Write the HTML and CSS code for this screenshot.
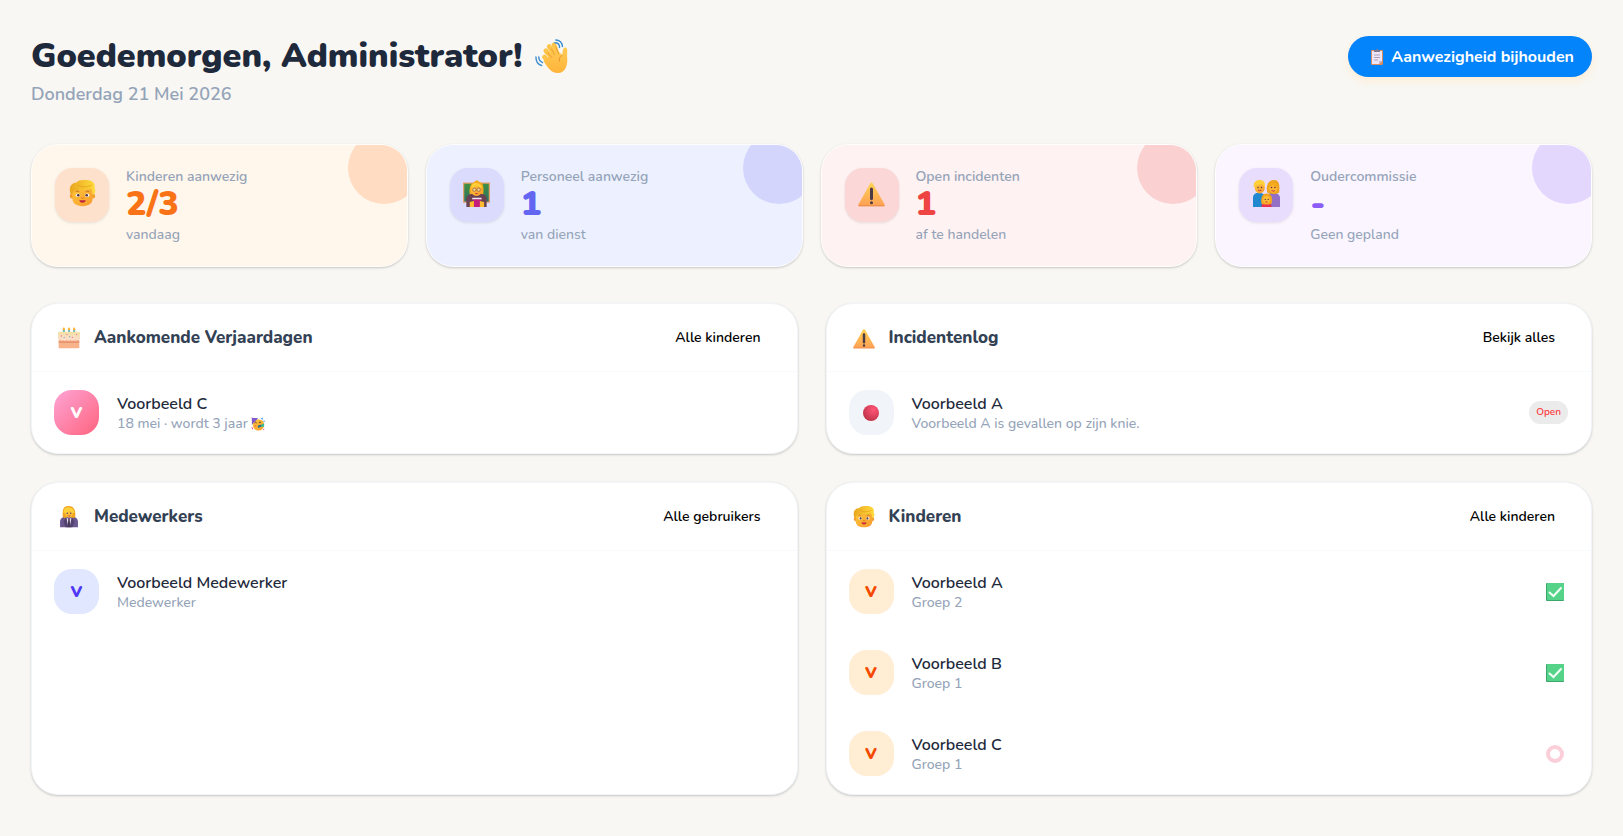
FILE: index.html
```html
<!DOCTYPE html>
<html lang="nl">
<head>
    <meta charset="UTF-8" />
    <meta name="viewport" content="width=device-width, initial-scale=1" />
    <title>Dashboard</title>
    <link rel="stylesheet" href="styles.css">
</head>
<body>
<!-- Gedeelde iconen -->
<svg class="sprite" aria-hidden="true">
    <defs>
        <linearGradient id="geel" x1="0" y1="0" x2="1" y2="1">
            <stop offset="0" stop-color="#ffc83a" />
            <stop offset="1" stop-color="#f79a2e" />
        </linearGradient>
        <linearGradient id="hand" x1="0" y1="0" x2="0" y2="1">
            <stop offset="0" stop-color="#ffca55" />
            <stop offset="1" stop-color="#ffb43a" />
        </linearGradient>
        <linearGradient id="haar" x1="0" y1="0" x2="1" y2="0">
            <stop offset="0" stop-color="#e9a520" />
            <stop offset="1" stop-color="#ffdc3c" />
        </linearGradient>
        <linearGradient id="driehoek" x1="0" y1="0" x2="0" y2="1">
            <stop offset="0" stop-color="#ffd352" />
            <stop offset="1" stop-color="#ff9f55" />
        </linearGradient>
        <linearGradient id="glazuur" x1="0" y1="0" x2="0" y2="1">
            <stop offset="0" stop-color="#f4dfa0" />
            <stop offset="1" stop-color="#fbdcd0" />
        </linearGradient>
        <linearGradient id="bord" x1="0" y1="0" x2="0" y2="1">
            <stop offset="0" stop-color="#3f9142" />
            <stop offset="1" stop-color="#2b7064" />
        </linearGradient>
        <radialGradient id="rood" cx="0.65" cy="0.3" r="0.8">
            <stop offset="0" stop-color="#ff5578" />
            <stop offset="1" stop-color="#ba3145" />
        </radialGradient>
        <symbol id="kind" viewBox="0 0 32 32">
            <circle cx="4" cy="19" r="3" fill="#f39a2c" />
            <circle cx="28" cy="19" r="3" fill="#f0a030" />
            <path d="M4 7h24v15c0 6-5 9-12 9S4 28 4 22z" fill="url(#geel)" />
            <path d="M2 17C-1 9 3 3 9 3c2-3 7-3 12-3 7 0 11 5 9 9 2 3 1 6 0 8h-2c0-3-1-5-2-7-6 3-13 1-16 2-4 0-5 2-6 5z" fill="url(#haar)" />
            <path d="M10 6c5 3 11 3 17 0" fill="none" stroke="#e8a01d" stroke-width="1" />
            <path d="M8 14q2-2 4 0M20 14q2-2 4 0" fill="none" stroke="#c77a22" stroke-width="1.200" />
            <ellipse cx="10.500" cy="18" rx="2.500" ry="2" fill="#fff" />
            <ellipse cx="21.500" cy="18" rx="2.500" ry="2" fill="#fff" />
            <circle cx="11" cy="18" r="1.500" fill="#4a3040" />
            <circle cx="21" cy="18" r="1.500" fill="#4a3040" />
            <path d="M14 21q2 1.500 4 0" fill="none" stroke="#e07a20" stroke-width="1.200" />
            <path d="M12 24h8q-1 3-4 3t-4-3z" fill="#c2243e" />
        </symbol>
        <symbol id="leraar" viewBox="0 0 32 32">
            <path d="M0 3h32v24H0z" fill="#e3a06a" />
            <path d="M1.500 4.500h29v21h-29z" fill="url(#bord)" />
            <path d="M8 17C7 9 9 4 13 3c1-3 5-3 6-1 5 1 6 6 5 15l-4 3h-8z" fill="#f6a91f" />
            <path d="M4 32V22c0-4 4-6 12-6s12 2 12 6v10z" fill="#694150" />
            <ellipse cx="16" cy="12" rx="6.500" ry="7" fill="url(#geel)" />
            <path d="M9.500 9c1-5 4-6 8-5 3 0 5 3 5 5-4 0-5-2-6-3-2 2-4 3-7 3z" fill="#ffcf38" />
            <g fill="#fbd68e" stroke="#80503a" stroke-width="0.800">
                <circle cx="13.500" cy="11.500" r="2" />
                <circle cx="18.500" cy="11.500" r="2" />
            </g>
            <path d="M14 15.500h4q-2 2-4 0z" fill="#c2243e" />
            <path d="M11 21h11v2H11z" fill="#eee5f5" />
            <path d="M12 23h9v9h-9z" fill="#c51d7c" />
            <path d="M8 26l5-1v7H8zM25 26l-5-1v7h5z" fill="#ffba30" />
        </symbol>
        <symbol id="waarschuwing" viewBox="0 0 32 32">
            <path d="M14.500 4q1.500-2 3 0L31.500 29q1 2-1 2h-29q-2 0-1-2z" fill="url(#driehoek)" />
            <path d="M1 30.500h30" stroke="#e58a45" stroke-width="1" />
            <path d="M14.200 11q0-2 1.800-2t1.800 2v11q0 2-1.800 2t-1.800-2z" fill="#4b3b46" />
            <circle cx="16" cy="27" r="1.800" fill="#4b3b46" />
        </symbol>
        <symbol id="gezin" viewBox="0 0 32 32">
            <path d="M0 32V21c0-4 3-6 7-6 5 0 8 3 8 7v10z" fill="#2187cf" />
            <path d="M16 32V21c0-4 3-6 8-6 5 0 8 3 8 6v11z" fill="#9470c4" />
            <ellipse cx="8" cy="9" rx="6" ry="7" fill="url(#geel)" />
            <path d="M1 9C0 3 3 0 8 0s7 3 6 8c-2-1-3-3-4-3-3 1-6 0-8 3z" fill="#ffd03a" />
            <path d="M17 15c-1-3-1-7 0-9 1-4 4-6 8-6 6 0 7 6 6 15-4 2-10 2-14 0z" fill="#eda41e" />
            <ellipse cx="24" cy="9.500" rx="5" ry="5.500" fill="#ffb435" />
            <path d="M18 8c1-5 4-6 7-5 4 1 5 4 5 6-4 0-5-2-6-3-2 2-4 3-6 2z" fill="#f5a91c" />
            <g fill="#5c3945">
                <circle cx="6" cy="9" r="0.900" />
                <circle cx="10" cy="9" r="0.900" />
                <circle cx="22" cy="9" r="0.900" />
                <circle cx="26" cy="9" r="0.900" />
            </g>
            <path d="M6 12q2 1.500 4 0M22 12.500q2 1.500 4 0" fill="none" stroke="#c2243e" stroke-width="1" />
            <path d="M10 32c0-4 2-5 6-5s6 1 6 5z" fill="#ed2f52" />
            <path d="M10 28c-1-7 1-12 6-12s8 4 6 12l-3 1h-6z" fill="#f2a51f" />
            <ellipse cx="16" cy="23.500" rx="4" ry="4.500" fill="#ffbd38" />
            <circle cx="14.500" cy="23" r="0.800" fill="#5c3945" />
            <circle cx="18" cy="23" r="0.800" fill="#5c3945" />
            <path d="M14.500 26h3" stroke="#c2243e" stroke-width="1" />
        </symbol>
        <symbol id="taart" viewBox="0 0 32 32">
            <path d="M7 3h3v6H7zM14.500 3h3v6h-3zM22 3h3v6h-3z" fill="#4cbad0" />
            <path d="M8.500 0l1.800 3q0 2-1.800 2T6.700 3zM16 0l1.800 3q0 2-1.800 2t-1.800-2zM23.500 0l1.800 3q0 2-1.800 2t-1.800-2z" fill="#ffb12f" />
            <path d="M1 18h30v12q0 1-1 1H2q-1 0-1-1z" fill="#f9b38a" />
            <path d="M1 21h30v2H1z" fill="#df8866" />
            <path d="M0 9q0-2 2-2h28q2 0 2 2v8q-2 3-4 1-2 3-5 1-2 2-5 0-2 2-5 0-3 2-5 0-3 2-5-1-2 1-3-1z" fill="url(#glazuur)" />
            <g fill="#e36ba0">
                <circle cx="5" cy="13" r="0.900" />
                <circle cx="13" cy="11" r="0.900" />
                <circle cx="21" cy="15" r="0.900" />
                <circle cx="27" cy="11" r="0.900" />
            </g>
            <circle cx="9" cy="15" r="0.900" fill="#7fa0d8" />
            <circle cx="17" cy="14" r="0.900" fill="#7fa0d8" />
        </symbol>
        <symbol id="medewerker" viewBox="0 0 32 32">
            <path d="M3 31V23c0-5 4-8 13-8s13 3 13 8v8z" fill="#6a578e" />
            <path d="M12 16l4 4 4-4-2 15h-4z" fill="#e9e1f1" />
            <path d="M12 16l3 15h-4l-3-8zM20 16l-3 15h4l3-8z" fill="#52426f" />
            <path d="M15 19h2l1 12h-4z" fill="#493956" />
            <path d="M7 16C6 5 8 0 15 0c8 0 11 5 10 16q-2 2-4 1l-5-2-5 2q-2 1-4-1z" fill="#f0a41d" />
            <ellipse cx="16" cy="10" rx="6" ry="7" fill="#ffbe38" />
            <path d="M8 10c0-7 4-9 8-8 5 0 8 3 8 8-4 0-6-2-7-4-2 3-5 4-9 4z" fill="#ffd23c" />
            <circle cx="13.500" cy="10.500" r="1" fill="#4f465f" />
            <circle cx="18.500" cy="10.500" r="1" fill="#4f465f" />
            <path d="M14 14q2 1.500 4 0" fill="none" stroke="#c2243e" stroke-width="1" />
        </symbol>
        <symbol id="feest" viewBox="0 0 32 32">
            <path d="M2 2h14L2 18z" fill="#7857c7" />
            <circle cx="17" cy="18" r="13" fill="url(#geel)" />
            <path d="M1 1l14 3-9 10z" fill="#8359cd" />
            <path d="M8 14q3-4 5 0M18 13q3-3 5 0" fill="none" stroke="#533a37" stroke-width="2" />
            <path d="M15 20l8-3 2 4-8 4z" fill="#296f8e" />
            <path d="M23 18l7-4v8l-6 1z" fill="#31bd94" />
            <path d="M22 4l4-3 2 5zM27 9l4-1v4z" fill="#3598e5" />
            <path d="M1 23l4 2-2 4zM27 28l3-2v4zM16 1l4 2" fill="#eb4086" />
            <circle cx="10" cy="20" r="2" fill="#f46d50" />
        </symbol>
        <symbol id="vink" viewBox="0 0 18 18">
            <rect width="18" height="18" rx="1" fill="#3ba56b" />
            <rect x="1" width="17" height="17" rx="1" fill="#55d389" />
            <path d="M3.500 9.500l4 3.500L15 5" fill="none" stroke="#f5fff8" stroke-width="2" stroke-linecap="round" />
        </symbol>
    </defs>
</svg>

<main class="container">
    <header class="kop">
        <div>
            <h1>Goedemorgen, Administrator!
                <svg class="zwaai" viewBox="0 0 36 38" aria-hidden="true">
                    <g fill="none" stroke="#ffc54a" stroke-width="5" stroke-linecap="round">
                        <path d="M20 23L11.500 13.500" />
                        <path d="M22 20L15 9" />
                        <path d="M24 18L20 7" />
                        <path d="M15 26L10 20" />
                    </g>
                    <path d="M12 22l11-9 6 5c0-5 1-8 3-8 3 0 2 4 2 10 1 7-1 17-10 17-7 0-11-6-15-13z" fill="url(#hand)" />
                    <path d="M13 15l5 6M17 11l4 7M22 9l3 8" fill="none" stroke="#e79a31" stroke-width="1" />
                    <path d="M29 18c-3 2-4 4-3 7" fill="none" stroke="#e8912e" stroke-width="1" />
                    <g fill="none" stroke="#3d8ed0" stroke-width="1.500" stroke-linecap="round">
                        <path d="M1 20c0 5 2 8 6 9M4 20c0 3 2 5 4 6" />
                        <path d="M22 2c4 0 7 3 7 7M21 5c3 0 5 2 5 5" />
                    </g>
                </svg>
            </h1>
            <p class="datum">Donderdag 21 Mei 2026</p>
        </div>
        <button class="btn-aanwezigheid" type="button">
            <svg class="klembord" viewBox="0 0 12 16" aria-hidden="true">
                <rect y="1" width="12" height="15" rx="1" fill="#d88c62" />
                <path d="M1 2h10v10l-3 3H1z" fill="#eee5f6" />
                <path d="M11 12H8v3z" fill="#c8b8d6" />
                <path d="M3 1h2q1-2 2 0h2v2H3z" fill="#82798f" />
                <path d="M3 6h6M3 8.500h6M3 11h4" stroke="#aea3bc" stroke-width="1" />
            </svg>
            Aanwezigheid bijhouden
        </button>
    </header>

    <section class="stats">
        <article class="stat stat-oranje">
            <div class="stat-icoon"><svg aria-hidden="true"><use href="#kind" /></svg></div>
            <div class="stat-tekst">
                <h2>Kinderen aanwezig</h2>
                <strong>2/3</strong>
                <p>vandaag</p>
            </div>
        </article>
        <article class="stat stat-blauw">
            <div class="stat-icoon"><svg aria-hidden="true"><use href="#leraar" /></svg></div>
            <div class="stat-tekst">
                <h2>Personeel aanwezig</h2>
                <strong>1</strong>
                <p>van dienst</p>
            </div>
        </article>
        <article class="stat stat-rood">
            <div class="stat-icoon"><svg aria-hidden="true"><use href="#waarschuwing" /></svg></div>
            <div class="stat-tekst">
                <h2>Open incidenten</h2>
                <strong>1</strong>
                <p>af te handelen</p>
            </div>
        </article>
        <article class="stat stat-paars">
            <div class="stat-icoon"><svg aria-hidden="true"><use href="#gezin" /></svg></div>
            <div class="stat-tekst">
                <h2>Oudercommissie</h2>
                <strong>-</strong>
                <p>Geen gepland</p>
            </div>
        </article>
    </section>

    <section class="panelen">
        <article class="paneel">
            <header class="paneel-kop">
                <svg aria-hidden="true"><use href="#taart" /></svg>
                <h2>Aankomende Verjaardagen</h2>
                <a href="#">Alle kinderen</a>
            </header>
            <ul>
                <li>
                    <span class="avatar avatar-roze">V</span>
                    <div class="info">
                        <h3>Voorbeeld C</h3>
                        <p>18 mei · wordt 3 jaar <svg class="feest" aria-hidden="true"><use href="#feest" /></svg></p>
                    </div>
                </li>
            </ul>
        </article>

        <article class="paneel">
            <header class="paneel-kop">
                <svg aria-hidden="true"><use href="#waarschuwing" /></svg>
                <h2>Incidentenlog</h2>
                <a href="#">Bekijk alles</a>
            </header>
            <ul>
                <li>
                    <span class="avatar avatar-grijs">
                        <svg viewBox="0 0 16 16" aria-hidden="true"><circle cx="8" cy="8" r="8" fill="url(#rood)" /></svg>
                    </span>
                    <div class="info">
                        <h3>Voorbeeld A</h3>
                        <p>Voorbeeld A is gevallen op zijn knie.</p>
                    </div>
                    <span class="badge">Open</span>
                </li>
            </ul>
        </article>

        <article class="paneel">
            <header class="paneel-kop">
                <svg aria-hidden="true"><use href="#medewerker" /></svg>
                <h2>Medewerkers</h2>
                <a href="#">Alle gebruikers</a>
            </header>
            <ul>
                <li>
                    <span class="avatar avatar-blauw">V</span>
                    <div class="info">
                        <h3>Voorbeeld Medewerker</h3>
                        <p>Medewerker</p>
                    </div>
                </li>
            </ul>
        </article>

        <article class="paneel">
            <header class="paneel-kop">
                <svg aria-hidden="true"><use href="#kind" /></svg>
                <h2>Kinderen</h2>
                <a href="#">Alle kinderen</a>
            </header>
            <ul>
                <li>
                    <span class="avatar avatar-oranje">V</span>
                    <div class="info">
                        <h3>Voorbeeld A</h3>
                        <p>Groep 2</p>
                    </div>
                    <svg class="status" role="img" aria-label="Aanwezig"><use href="#vink" /></svg>
                </li>
                <li>
                    <span class="avatar avatar-oranje">V</span>
                    <div class="info">
                        <h3>Voorbeeld B</h3>
                        <p>Groep 1</p>
                    </div>
                    <svg class="status" role="img" aria-label="Aanwezig"><use href="#vink" /></svg>
                </li>
                <li>
                    <span class="avatar avatar-oranje">V</span>
                    <div class="info">
                        <h3>Voorbeeld C</h3>
                        <p>Groep 1</p>
                    </div>
                    <svg class="status" viewBox="0 0 18 18" role="img" aria-label="Afwezig">
                        <circle cx="9" cy="9" r="7" fill="none" stroke="#fbcfda" stroke-width="4" />
                    </svg>
                </li>
            </ul>
        </article>
    </section>
</main>
</body>
</html>
```
FILE: styles.css
```css
:root {
    --tekst: #1e293b;
    --tekst-kop: #334155;
    --tekst-zacht: #94a3b8;
    --rand: #f1f5f9;
    --achtergrond: #f8f7f3;
    --schaduw: 0 1px 3px rgba(0, 0, 0, 0.1), 0 1px 2px rgba(0, 0, 0, 0.1);
}

* {
    box-sizing: border-box;
}

body {
    margin: 0;
    min-height: 100vh;
    padding: 36px 31px;
    background: var(--achtergrond);
    color: var(--tekst);
    font-family: Nunito, Lato, sans-serif;
}

h1, h2, h3, p, ul {
    margin: 0;
    padding: 0;
}

.sprite {
    position: absolute;
    width: 0;
    height: 0;
}

.container {
    max-width: 1600px;
    margin: 0 auto;
}

.kop {
    display: flex;
    justify-content: space-between;
    align-items: flex-start;
    margin-bottom: 36px;
}

h1 {
    display: flex;
    align-items: center;
    gap: 12px;
    font-size: 34px;
    line-height: 40px;
    font-weight: 900;
}

.zwaai {
    width: 34px;
    height: 36px;
}

.datum {
    margin-top: 4px;
    font-size: 18px;
    line-height: 28px;
    font-weight: 600;
    color: var(--tekst-zacht);
}

.btn-aanwezigheid {
    display: flex;
    align-items: center;
    gap: 8px;
    height: 41px;
    padding: 0 18px 0 23px;
    border: none;
    border-radius: 24px;
    background: #0484fb;
    color: #fff;
    font-family: inherit;
    font-size: 16px;
    font-weight: 700;
    cursor: pointer;
    box-shadow: 0 4px 8px #ffedd5;
}

.klembord {
    width: 12px;
    height: 16px;
}

.stats {
    display: grid;
    grid-template-columns: repeat(4, 1fr);
    gap: 18px;
    margin-bottom: 36px;
}

.stat {
    position: relative;
    display: flex;
    align-items: flex-start;
    gap: 17px;
    padding: 23px;
    border: 1px solid rgba(255, 255, 255, 0.8);
    border-radius: 27px;
    overflow: hidden;
    box-shadow: var(--schaduw);
}

/* Cirkel in de rechterbovenhoek */
.stat::after {
    content: "";
    position: absolute;
    top: -13px;
    right: -13px;
    width: 72px;
    height: 72px;
    border-radius: 50%;
    background: var(--cirkel);
}

.stat-icoon {
    display: flex;
    align-items: center;
    justify-content: center;
    width: 54px;
    height: 54px;
    border-radius: 18px;
    background: var(--vlak);
    box-shadow: 0 1px 3px rgba(0, 0, 0, 0.1);
}

.stat-icoon svg {
    width: 27px;
    height: 27px;
    margin-bottom: 4px;
}

.stat-tekst h2 {
    font-size: 14px;
    line-height: 18px;
    font-weight: 600;
    color: var(--tekst-zacht);
}

.stat-tekst strong {
    display: block;
    font-size: 34px;
    line-height: 36px;
    font-weight: 900;
    color: var(--accent);
}

.stat-tekst p {
    margin-top: 4px;
    font-size: 14px;
    line-height: 17px;
    font-weight: 500;
    color: var(--tekst-zacht);
}

.stat-oranje {
    --accent: #f97316;
    --cirkel: #ffdcc2;
    --vlak: #fee1cc;
    background: #fff6ec;
}

.stat-blauw {
    --accent: #6366f1;
    --cirkel: #d3d5fc;
    --vlak: #dadbfd;
    background: #edf1ff;
}

.stat-rood {
    --accent: #ef4444;
    --cirkel: #fad0d0;
    --vlak: #fbd7d7;
    background: #fef2f2;
}

.stat-paars {
    --accent: #8b5cf6;
    --cirkel: #e3d7fe;
    --vlak: #e8ddfd;
    background: #faf5ff;
}

.panelen {
    display: grid;
    grid-template-columns: repeat(2, 1fr);
    gap: 28px;
}

.paneel {
    border: 1px solid var(--rand);
    border-radius: 27px;
    background: #fff;
    overflow: hidden;
    box-shadow: var(--schaduw);
}

.paneel-kop {
    display: flex;
    align-items: center;
    gap: 14px;
    height: 68px;
    padding: 0 36px 0 26px;
    border-bottom: 1px solid #f8fafc;
}

.paneel-kop svg {
    width: 22px;
    height: 22px;
}

.paneel-kop h2 {
    flex: 1;
    font-size: 17px;
    line-height: 24px;
    font-weight: 800;
    color: var(--tekst-kop);
}

.paneel-kop a {
    font-size: 14px;
    font-weight: 600;
    color: #000;
    text-decoration: none;
}

.paneel ul {
    list-style: none;
}

.paneel li {
    display: flex;
    align-items: center;
    gap: 18px;
    padding: 18px 23px 18px 22px;
}

.avatar {
    display: flex;
    align-items: center;
    justify-content: center;
    width: 45px;
    height: 45px;
    border-radius: 18px;
    font-size: 16px;
    font-weight: 900;
}

.avatar svg {
    width: 16px;
    height: 16px;
}

.avatar-roze {
    background: linear-gradient(135deg, #fda5d5, #ff637e);
    color: #fff;
}

.avatar-grijs {
    background: #f1f5f9;
}

.avatar-blauw {
    background: #e0e7ff;
    color: #4f39f6;
}

.avatar-oranje {
    background: #ffedd4;
    color: #f54900;
}

.info {
    flex: 1;
}

.info h3 {
    font-size: 16px;
    line-height: 22px;
    font-weight: 600;
}

.info p {
    font-size: 14px;
    line-height: 18px;
    font-weight: 500;
    color: var(--tekst-zacht);
}

.feest {
    width: 14px;
    height: 14px;
    vertical-align: middle;
}

.badge {
    padding: 4px 7px;
    border-radius: 12px;
    background: #ebebeb;
    color: #fb3b42;
    font-size: 10px;
    line-height: 15px;
    font-weight: 600;
}

.status {
    width: 18px;
    height: 18px;
    margin-right: 4px;
}

@media (max-width: 1000px) {
    .stats {
        grid-template-columns: repeat(2, 1fr);
    }

    .panelen {
        grid-template-columns: 1fr;
    }
}
```
